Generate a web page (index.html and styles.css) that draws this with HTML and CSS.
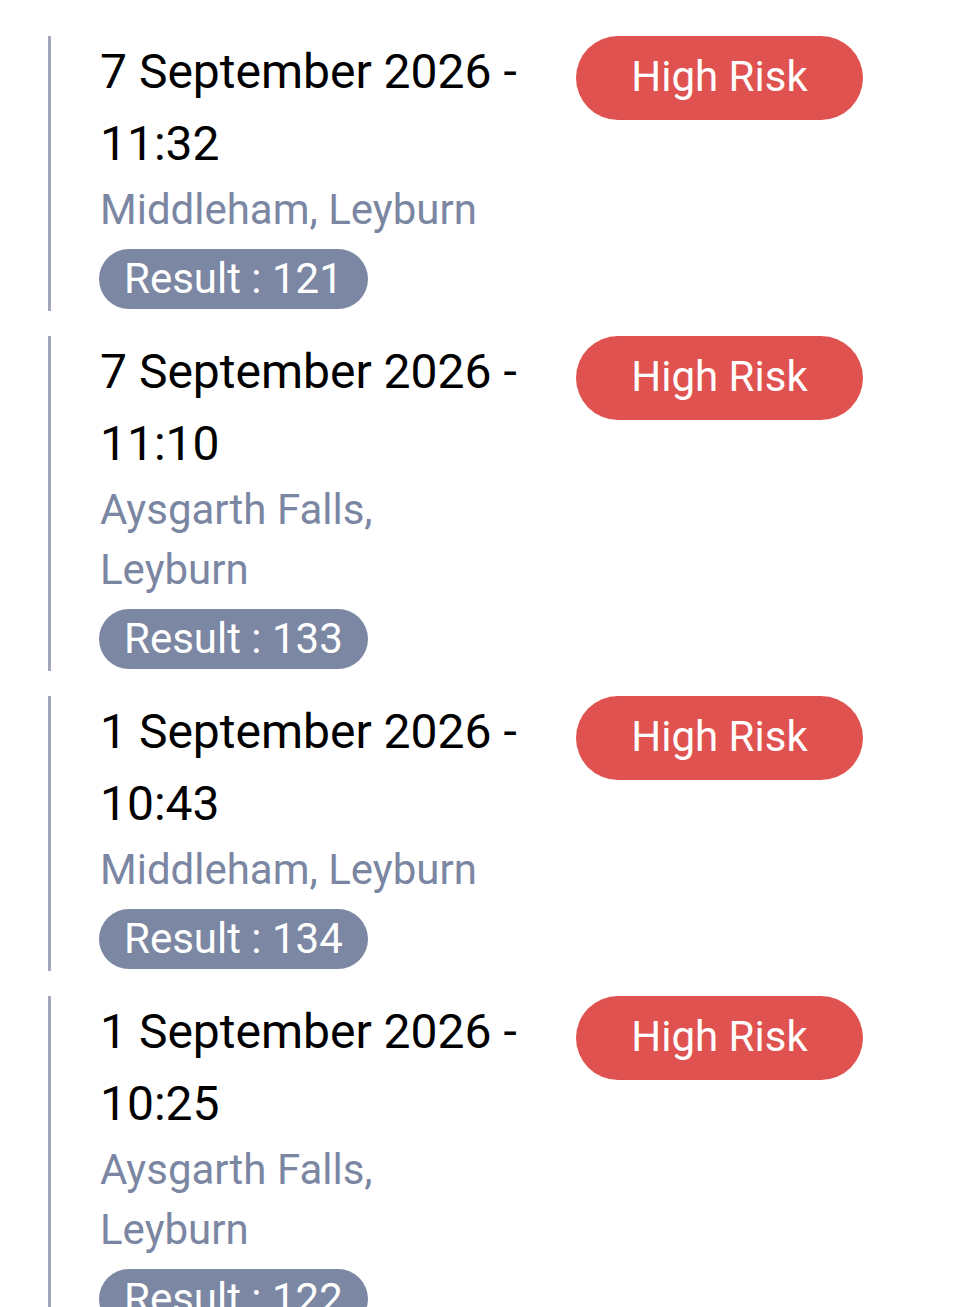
FILE: index.html
```html
<!DOCTYPE html>
<html lang="en">
<head>
<meta charset="utf-8">
<title>Results</title>
<link rel="stylesheet" href="styles.css">
</head>
<body>
<ul class="list">
  <li class="item">
    <div class="info">
      <div class="date">7 September 2026 - 11:32</div>
      <div class="place">Middleham, Leyburn</div>
      <span class="result">Result : 121</span>
    </div>
    <span class="risk">High Risk</span>
  </li>
  <li class="item">
    <div class="info">
      <div class="date">7 September 2026 - 11:10</div>
      <div class="place">Aysgarth Falls, Leyburn</div>
      <span class="result">Result : 133</span>
    </div>
    <span class="risk">High Risk</span>
  </li>
  <li class="item">
    <div class="info">
      <div class="date">1 September 2026 - 10:43</div>
      <div class="place">Middleham, Leyburn</div>
      <span class="result">Result : 134</span>
    </div>
    <span class="risk">High Risk</span>
  </li>
  <li class="item">
    <div class="info">
      <div class="date">1 September 2026 - 10:25</div>
      <div class="place">Aysgarth Falls, Leyburn</div>
      <span class="result">Result : 122</span>
    </div>
    <span class="risk">High Risk</span>
  </li>
</ul>
</body>
</html>
```
FILE: styles.css
```css
html, body {
  margin: 0;
  padding: 0;
  background: #ffffff;
}
body {
  font-family: Roboto, "Noto Sans", sans-serif;
  overflow: hidden;
}
.list {
  list-style: none;
  margin: 0;
  padding: 36px 0 0 48px;
  display: flex;
  flex-direction: column;
  gap: 25px;
}
.item {
  display: flex;
  align-items: flex-start;
  border-left: 3px solid #a3a6b8;
  padding-left: 49px;
}
.info {
  width: 421px;
  display: flex;
  flex-direction: column;
  align-items: flex-start;
}
.date {
  font-size: 48px;
  line-height: 72px;
  color: #000000;
}
.place {
  font-size: 42px;
  line-height: 60px;
  color: #7b86a2;
}
.result {
  margin-top: 9px;
  margin-left: -1px;
  height: 60px;
  line-height: 60px;
  padding: 0 25px;
  border-radius: 30px;
  background: #7b87a3;
  color: #ffffff;
  font-size: 42px;
  margin-bottom: 2px;
}
.risk {
  margin-left: 55px;
  width: 287px;
  height: 84px;
  line-height: 82px;
  text-align: center;
  border-radius: 42px;
  background: #e0524f;
  color: #ffffff;
  font-size: 42px;
}
```
